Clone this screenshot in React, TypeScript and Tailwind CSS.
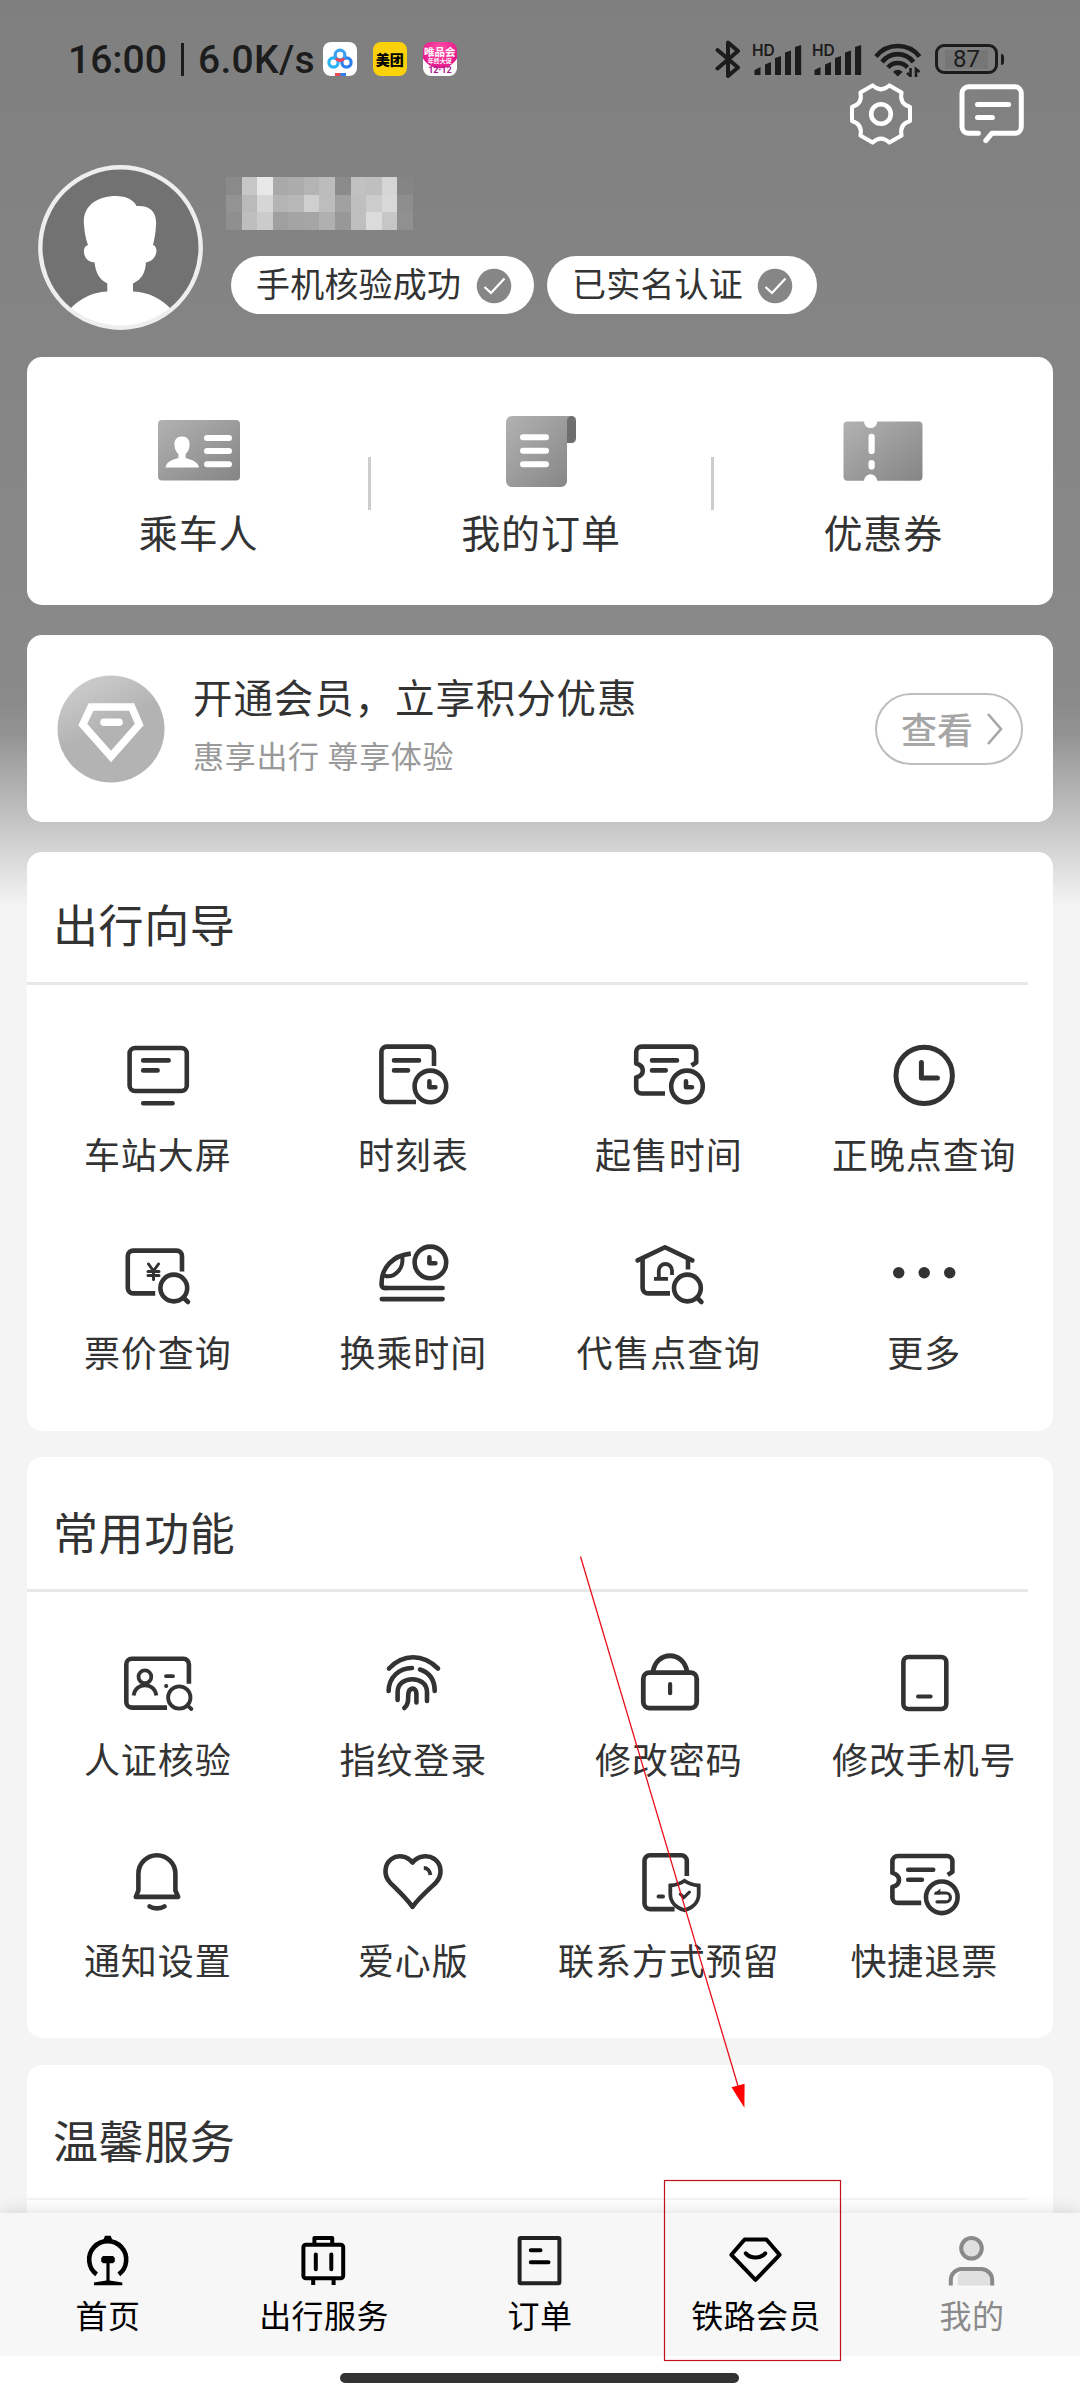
import type { ReactNode } from 'react';

interface Entry {
  label: string;
  icon: ReactNode;
}

// Mosaic over the user name, one class per block
const mosaicRows = [
  ['bg-[#8a8a8a]', 'bg-[#c6c6c6]', 'bg-[#e8e8e8]', 'bg-[#a9a9a9]', 'bg-[#acacac]', 'bg-[#b4b4b4]', 'bg-[#bcbcbc]', 'bg-[#8b8b8b]', 'bg-[#c1c1c1]', 'bg-[#bfbfbf]', 'bg-[#d5d5d5]', 'bg-[#858585]'],
  ['bg-[#939393]', 'bg-[#bababa]', 'bg-[#d6d6d6]', 'bg-[#b4b4b4]', 'bg-[#b8b8b8]', 'bg-[#cfcfcf]', 'bg-[#bdbdbd]', 'bg-[#a1a1a1]', 'bg-[#bfbfbf]', 'bg-[#cccccc]', 'bg-[#d8d8d8]', 'bg-[#8e8e8e]'],
  ['bg-[#8f8f8f]', 'bg-[#bebebe]', 'bg-[#cbcbcb]', 'bg-[#a0a0a0]', 'bg-[#a4a4a4]', 'bg-[#a5a5a5]', 'bg-[#b0b0b0]', 'bg-[#989898]', 'bg-[#bfbfbf]', 'bg-[#dbdbdb]', 'bg-[#c6c6c6]', 'bg-[#909090]'],
];

function LineIcon({ children }: { children: ReactNode }) {
  return (
    <svg
      viewBox="0 0 80 80"
      className="h-20 w-20"
      fill="none"
      stroke="#333"
      strokeWidth="4.6"
      strokeLinecap="round"
      strokeLinejoin="round"
    >
      {children}
    </svg>
  );
}

function SmallClock({ cx, cy }: { cx: number; cy: number }) {
  return (
    <g>
      <circle cx={cx} cy={cy} r="15.8" />
      <path d={`M${cx - 1} ${cy - 5} V${cy + 0.8} H${cx + 5}`} />
    </g>
  );
}

function Ticket() {
  return (
    <g>
      <path strokeLinecap="butt" d="M62.5 31.5 L67.2 28.5 V18.1 a5.5 5.5 0 0 0 -5.5 -5.5 H12.7 a5.5 5.5 0 0 0 -5.5 5.5 V29.5 C16 32 16 41 7.2 43.5 V54 a5.5 5.5 0 0 0 5.5 5.5 H36" />
      <path d="M23 26.4 H48 M23 36.4 H36.7" />
    </g>
  );
}

const guideItems: Entry[] = [
  {
    label: '车站大屏',
    icon: (
      <LineIcon>
        <rect x="11.6" y="14" width="57.2" height="43" rx="5.5" />
        <path d="M25.2 26.4 H50.6 M25.2 36.4 H39.6 M25.2 69.2 H54.6" />
      </LineIcon>
    ),
  },
  {
    label: '时刻表',
    icon: (
      <LineIcon>
        <path strokeLinecap="butt" d="M61 32 V18.1 a5.5 5.5 0 0 0 -5.5 -5.5 H13.9 a5.5 5.5 0 0 0 -5.5 5.5 V62.5 a5.5 5.5 0 0 0 5.5 5.5 H43" />
        <path d="M21 26.4 H46 M21 36.4 H35" />
        <SmallClock cx={57.4} cy={52.4} />
      </LineIcon>
    ),
  },
  {
    label: '起售时间',
    icon: (
      <LineIcon>
        <Ticket />
        <SmallClock cx={58} cy={52.4} />
      </LineIcon>
    ),
  },
  {
    label: '正晚点查询',
    icon: (
      <LineIcon>
        <g strokeWidth="5">
          <circle cx="40.2" cy="41.4" r="28.2" />
          <path d="M37.4 28.4 V43.9 H53.4" />
        </g>
      </LineIcon>
    ),
  },
  {
    label: '票价查询',
    icon: (
      <LineIcon>
        <path strokeLinecap="butt" d="M64 39.6 V24.1 a5.5 5.5 0 0 0 -5.5 -5.5 H15.3 a5.5 5.5 0 0 0 -5.5 5.5 V55.9 a5.5 5.5 0 0 0 5.5 5.5 H37.2" />
        <path strokeWidth="3" d="M30.5 32 L35.5 39 L40.5 32 M35.5 39 V47.5 M30 39.5 H41 M30 43.5 H41" />
        <circle cx="55.8" cy="56" r="13.4" />
        <path d="M65.8 66 L70 70" />
      </LineIcon>
    ),
  },
  {
    label: '换乘时间',
    icon: (
      <LineIcon>
        <path strokeLinecap="butt" d="M37.8 21.6 C20 23.5 8.6 35 8.6 51 V53 a3 3 0 0 0 3 3 H14" />
        <path d="M12 56 H69.6 M8.8 67.1 H69.6" />
        <path strokeWidth="4" d="M29 24 C31.5 36 22 46.5 11.5 43.8" />
        <SmallClock cx={57.4} cy={30.4} />
      </LineIcon>
    ),
  },
  {
    label: '代售点查询',
    icon: (
      <LineIcon>
        <path d="M8.6 28.4 L36 15.2 L63.4 28.4" />
        <path strokeLinecap="butt" d="M13.6 27 V55.9 a5.5 5.5 0 0 0 5.5 5.5 H41 M59 27 V37.4" />
        <path strokeWidth="3.8" strokeLinecap="butt" d="M25 46.8 H39 M29.8 46.8 V38.6 a6.6 6.6 0 0 1 13.2 0 V43" />
        <circle cx="58.4" cy="56" r="13.4" />
        <path d="M68.4 66 L72.4 70" />
      </LineIcon>
    ),
  },
  {
    label: '更多',
    icon: (
      <LineIcon>
        <g fill="#333" stroke="none">
          <circle cx="14.7" cy="40.7" r="5.7" />
          <circle cx="40.2" cy="40.7" r="5.7" />
          <circle cx="65.7" cy="40.7" r="5.7" />
        </g>
      </LineIcon>
    ),
  },
];

const commonItems: Entry[] = [
  {
    label: '人证核验',
    icon: (
      <LineIcon>
        <path strokeLinecap="butt" d="M70.9 40.7 V21.3 a5.5 5.5 0 0 0 -5.5 -5.5 H13.8 a5.5 5.5 0 0 0 -5.5 5.5 V59.1 a5.5 5.5 0 0 0 5.5 5.5 H49" />
        <g strokeWidth="3.8">
          <circle cx="26.9" cy="33.8" r="6.4" />
          <path strokeLinecap="butt" d="M15.6 52.5 C17.5 38.8 36.5 38.8 38.4 52.5" />
          <path d="M48 33.2 H55 M48 43 H48.4" />
          <circle cx="61.3" cy="54.5" r="11.2" />
          <path d="M69.6 62.6 L73.4 66" />
        </g>
      </LineIcon>
    ),
  },
  {
    label: '指纹登录',
    icon: (
      <LineIcon>
        <path d="M16 25.5 C30 10.5 50 10.5 65 25.5" />
        <path d="M15.6 48 C16 34 26 25.3 39 25" />
        <path d="M47 26.5 C56 29.5 61.7 36.5 61.7 48" />
        <path d="M24.6 57 V49 C24.6 32 54 32 54 49 V58" />
        <path d="M31.3 65 C34.8 62 35.2 59 35.2 53 C35.2 43.5 43.4 43.5 43.4 51 V59.5" />
      </LineIcon>
    ),
  },
  {
    label: '修改密码',
    icon: (
      <LineIcon>
        <g strokeWidth="4.8">
          <rect x="14.3" y="29.7" width="53.4" height="35.4" rx="6" />
          <path d="M24 28.5 C27.5 7.5 54.5 7.5 58 28.5" />
          <path strokeWidth="4.2" d="M41.1 41 V50.2" />
        </g>
      </LineIcon>
    ),
  },
  {
    label: '修改手机号',
    icon: (
      <LineIcon>
        <rect x="19.4" y="14" width="42.9" height="52" rx="5" />
        <path strokeWidth="4" d="M34 53.4 H46.6" />
      </LineIcon>
    ),
  },
  {
    label: '通知设置',
    icon: (
      <LineIcon>
        <path d="M17.8 52.9 L20.4 46.5 V29.8 a18.5 18.5 0 0 1 37 0 V46.5 L60.2 52.9 Z" />
        <path d="M31.5 62.4 C35.5 65 42.5 65 46.5 62.4" />
      </LineIcon>
    ),
  },
  {
    label: '爱心版',
    icon: (
      <LineIcon>
        <path d="M39.5 18.5 C34 11.5 24.5 10.5 18.5 15 C11 20.5 10.5 31.5 17 38.5 C20 41.8 32 52.5 39.5 62.8 C47 52.5 60 41.8 63 38.5 C69.5 31.5 69 20.5 61.5 15 C55 10.5 45 11.5 39.5 18.5 Z" />
        <path strokeWidth="3.8" strokeLinecap="butt" d="M50.8 24 C54 24 57 26.6 57.4 31" />
      </LineIcon>
    ),
  },
  {
    label: '联系方式预留',
    icon: (
      <LineIcon>
        <path strokeLinecap="butt" d="M57.8 32 V16.7 a5.5 5.5 0 0 0 -5.5 -5.5 H21 a5.5 5.5 0 0 0 -5.5 5.5 V59.6 a5.5 5.5 0 0 0 5.5 5.5 H45.6" />
        <path strokeWidth="4" d="M29.6 52.5 H34" />
        <g strokeWidth="3.8" strokeLinejoin="miter">
          <path d="M55.5 36.8 C51 40 46 41.3 41.3 41.5 V50 C41.3 58 47 63.7 55.5 66.2 C64 63.7 69.7 58 69.7 50 V41.5 C65 41.3 60 40 55.5 36.8 Z" />
          <path strokeWidth="3.2" d="M51.4 50.2 L54.8 53.6 L60.4 48.2" />
        </g>
      </LineIcon>
    ),
  },
  {
    label: '快捷退票',
    icon: (
      <LineIcon>
        <g transform="translate(1.2 -0.6)">
          <Ticket />
        </g>
        <circle cx="57.8" cy="53.3" r="15.8" />
        <path strokeWidth="3.2" d="M52 49 H62 a4.4 4.4 0 0 1 0 8.8 H53" />
        <path fill="#333" stroke="none" d="M49.5 50.4 L56.4 44.6 V50.4 Z" />
      </LineIcon>
    ),
  },
];

const tabs: (Entry & { active?: boolean })[] = [
  {
    label: '首页',
    icon: (
      <>
        <path strokeWidth="4.6" strokeLinecap="butt" d="M18.6 43.4 A18.5 18.5 0 1 1 40.8 43.4" />
        <path fill="#000" stroke="none" d="M27 4.8 H32.6 L34.6 9.5 H25 Z M25 25 H35 L36.8 27 V30.5 L35 32.2 H31.6 V49.5 L44.3 51.6 V54.3 H16 V51.6 L28.4 49.5 V32.2 H25 L23.2 30.5 V27 Z" />
      </>
    ),
  },
  {
    label: '出行服务',
    icon: (
      <>
        <rect x="9.4" y="13.8" width="39.8" height="33.4" rx="2.5" />
        <path strokeLinecap="butt" d="M20.4 13 V7.1 H38.2 V13 M19.2 47 V54 M39.6 47 V54" />
        <path d="M21.8 23.6 V38.2 M37.3 23.6 V38.2" />
      </>
    ),
  },
  {
    label: '订单',
    icon: (
      <>
        <rect x="9.6" y="7" width="39.8" height="45.2" rx="1" stroke="#222" />
        <path d="M20.8 19.3 H30.5 M20.8 31.3 H38.5" />
      </>
    ),
  },
  {
    label: '铁路会员',
    icon: (
      <>
        <path d="M18.6 8.5 H40.4 L53.6 23.8 L29.5 48.9 L5.4 23.8 Z" />
        <path d="M19.8 22.4 C24.5 28 34.5 28 39.2 22.4" />
      </>
    ),
  },
  {
    label: '我的',
    active: true,
    icon: (
      <g stroke="#8a8a8a" strokeLinecap="butt">
        <circle cx="29.5" cy="17.3" r="10.3" fill="#e0e0e0" />
        <path fill="#e0e0e0" stroke="none" d="M15.6 54.4 V48 C15.6 43 18 40 23 40 H49 V54.4 Z" />
        <path d="M8.8 54.4 V49 a11 11 0 0 1 11 -11 H39.2 a11 11 0 0 1 11 11 V54.4" />
      </g>
    ),
  },
];

function Signal() {
  return (
    <svg viewBox="0 0 50 36" className="h-9 w-[50px]" fill="#1c1c1c">
      <text x="0" y="14.5" fontFamily="Inter, sans-serif" fontSize="15.5" fontWeight="600">HD</text>
      <path d="M2.5 34 V29 L8.5 26 V34 Z M13 34 V23.5 L19 21 V34 Z M23 34 V17 L29 15 V34 Z M33 34 V11.5 L39 9.5 V34 Z M43 34 V6 L49.2 4 V34 Z" />
    </svg>
  );
}

function StatusBar() {
  return (
    <div className="flex h-9 items-center pr-[76px] pl-[68px] text-[#1c1c1c]">
      <div className="flex items-center pt-px font-[Roboto] text-[39px] leading-9 font-medium">
        <span>16:00</span>
        <span className="mr-[14px] ml-[14px] h-[33px] w-[3px] bg-[#1c1c1c]" />
        <span className="tracking-[0.3px]">6.0K/s</span>
      </div>
      <div className="ml-[8px] flex gap-4">
        <svg viewBox="0 0 34 34" className="h-[34px] w-[34px]">
          <rect width="34" height="34" rx="8" fill="#fff" />
          <g fill="none" strokeWidth="3.2">
            <circle cx="10.5" cy="20.5" r="4.6" stroke="#2bb3f3" />
            <circle cx="23.5" cy="20.5" r="4.6" stroke="#2f80ed" />
            <circle cx="17" cy="13" r="4.8" stroke="#3fa0f0" />
            <path d="M13 16.5 C15 19 19 19 21 16.5" stroke="#f0465a" />
          </g>
          <rect x="12" y="31" width="11" height="3" fill="#f0465a" />
          <rect x="17.5" y="31" width="5.5" height="3" fill="#2f80ed" />
        </svg>
        <div className="flex h-[34px] w-[34px] items-center justify-center rounded-[8px] bg-[#fbd20a] text-[14px] font-black text-black">
          美团
        </div>
        <div className="flex h-[34px] w-[34px] flex-col items-center overflow-hidden rounded-[8px] bg-[radial-gradient(circle_at_50%_20%,#ff4fa8_0,#e6198a_19px,#fff_20px)] text-white">
          <span className="mt-1 text-[10.5px] leading-[11px] font-bold whitespace-nowrap">唯品会</span>
          <span className="text-[6px] leading-[7px] font-bold whitespace-nowrap">年终大促</span>
          <span className="mt-[2px] font-[Roboto] text-[9px] leading-[9px] font-bold text-[#a8188c]">12·12</span>
        </div>
      </div>
      <div className="ml-auto flex items-center">
        <svg viewBox="0 0 26 40" className="mr-[11px] h-10 w-[26px]" fill="none" stroke="#1c1c1c" strokeWidth="4" strokeLinejoin="round" strokeLinecap="round">
          <path d="M2.5 11 L23 28.5 L13 37 V3.5 L23 12 L2.5 29.5" />
        </svg>
        <Signal />
        <div className="w-[10px]" />
        <Signal />
        <svg viewBox="0 0 48 36" className="ml-3 h-9 w-12" fill="none" stroke="#1c1c1c" strokeWidth="4.6">
          <path d="M2 15.5 C13 1.5 34.5 1.5 45.5 15.5" />
          <path d="M8 21 C16.5 10.5 31 10.5 39.5 21" />
          <path d="M14 26.5 C19 20.5 28.5 20.5 33.5 26.5" />
          <path d="M19 31 C22 28 25.5 28 28.5 31 L23.8 35.5 Z" fill="#1c1c1c" stroke="none" />
          <path d="M36.5 27 V35 L33 32 M42 36 V28 L45.5 31" strokeWidth="2.6" />
        </svg>
        <div className="ml-[13px] flex h-[30px] w-[63px] items-center justify-center rounded-[9px] border-[3px] border-[#1c1c1c]">
          <span className="flex h-[19px] w-[43px] items-center justify-center bg-[#767676] font-[Roboto] text-[24px] leading-[19px]">87</span>
        </div>
        <span className="ml-[3px] h-[11px] w-[3px] rounded-r bg-[#1c1c1c]" />
      </div>
    </div>
  );
}

function VerifiedPill({ text, className }: { text: string; className: string }) {
  return (
    <div className={`flex h-[58px] items-center rounded-full bg-white pb-px text-[34px] leading-[50px] tracking-[0.2px] text-[#333] ${className}`}>
      <span className="-mt-[3px]">{text}</span>
      <svg viewBox="0 0 36 36" className="mt-[2px] ml-auto h-9 w-9">
        <circle cx="18" cy="18" r="17.3" fill="#868686" />
        <path d="M8.5 19 L15 25 L28.5 10.5" fill="none" stroke="#fff" strokeWidth="2.2" />
      </svg>
    </div>
  );
}

function Avatar() {
  return (
    <svg viewBox="0 0 165 165" className="h-[165px] w-[165px]">
      <defs>
        <clipPath id="face">
          <circle cx="82.5" cy="82.5" r="80" />
        </clipPath>
      </defs>
      <circle cx="82.5" cy="82.5" r="80" fill="#727272" />
      <path
        clipPath="url(#face)"
        fill="#fff"
        d="M46 60 C44 42 58 31 78 31 C88 31 96 35 98.5 41 C112 40 119 47 118 60 C117.6 68 116.5 74 115 80 C119 81 119 87 117.5 90 C115.5 95 111 97.3 107.9 97.3 C107.5 106 105 114 95 118.5 V126.5 C112 127 124 135 132.5 143.5 L140 165 H25 L32.5 143.5 C41 135 53 127 69.3 126.5 V118.5 C60 114 57.5 106 56.5 97.3 C52 97.3 48 95 46.5 90 C45.3 86 45.5 81.5 50 80 C47.5 73 46.5 67 46 60 Z"
      />
      <circle cx="82.5" cy="82.5" r="80.2" fill="none" stroke="#eee" strokeWidth="4.4" />
    </svg>
  );
}

function Header() {
  return (
    <header className="flex flex-col">
      <div className="flex justify-end gap-11 pt-[5px] pr-[55px]">
        <svg viewBox="0 0 64 64" className="h-16 w-16" fill="none" stroke="#fff" strokeWidth="4" strokeLinejoin="round">
          <path d="M61 25 V39 Q50 42.4 52.6 53.6 L40.4 60.6 Q32 52.8 23.6 60.6 L11.4 53.6 Q14 42.4 3 39 V25 Q14 21.6 11.4 10.4 L23.6 3.4 Q32 11.2 40.4 3.4 L52.6 10.4 Q50 21.6 61 25 Z" />
          <circle cx="32" cy="32" r="9.8" strokeWidth="4.6" />
        </svg>
        <svg viewBox="0 0 68 64" className="h-16 w-[68px]" fill="none" stroke="#fff" strokeWidth="5" strokeLinecap="round" strokeLinejoin="round">
          <path d="M21.4 51.3 H11.5 a6.5 6.5 0 0 1 -6.5 -6.5 V11.3 a6.5 6.5 0 0 1 6.5 -6.5 H57.8 a6.5 6.5 0 0 1 6.5 6.5 V44.8 a6.5 6.5 0 0 1 -6.5 6.5 H34.8 L28.8 58.6" />
          <path d="M20.5 22.4 H51.6 M20.5 35.4 H35.4" />
        </svg>
      </div>
      <div className="mt-[19px] flex pl-[38px]">
        <Avatar />
        <div className="ml-[23px] pt-3">
          <div className="flex w-[187px] flex-col">
            {mosaicRows.map((row, i) => (
              <div key={i} className="flex h-[17.7px]">
                {row.map((color, j) => (
                  <span key={j} className={`flex-1 ${color}`} />
                ))}
              </div>
            ))}
          </div>
          <div className="mt-[26px] ml-[5px] flex gap-[13px]">
            <VerifiedPill text="手机核验成功" className="w-[303px] pr-[22px] pl-[25px]" />
            <VerifiedPill text="已实名认证" className="w-[270px] pr-[24px] pl-[25px]" />
          </div>
        </div>
      </div>
    </header>
  );
}

function QuickCard() {
  return (
    <section className="flex h-[248px] items-center rounded-[15px] bg-white pl-[2px]">
      <div className="flex flex-1 flex-col items-center pt-[9px]">
        <svg viewBox="0 0 82 72" className="h-[72px] w-[82px]">
          <defs>
            <linearGradient id="quick" x1="0" y1="0" x2="1" y2="1">
              <stop offset="0" stopColor="#b2b2b2" />
              <stop offset="1" stopColor="#858585" />
            </linearGradient>
          </defs>
          <rect y="5" width="82" height="60.5" rx="4" fill="url(#quick)" />
          <path fill="#fff" d="M24 21.5 C29 21.5 31.8 25 31.6 29.5 C31.4 34 30 37 27.6 39 V43 C34 45 40 46.5 41 52.5 H7.5 C8.5 46.5 14 45 20.4 43 V39 C18 37 16.6 34 16.4 29.5 C16.2 25 19 21.5 24 21.5 Z" />
          <path stroke="#fff" strokeWidth="6" strokeLinecap="round" d="M49 23 H71 M49 36 H71 M49 49.2 H71" />
        </svg>
        <span className="mt-[19px] text-[39px] leading-[50px] tracking-[0.9px]">乘车人</span>
      </div>
      <span className="mt-1 h-[53px] w-[3px] bg-[#cdcdcd]" />
      <div className="flex flex-1 flex-col items-center pt-[9px]">
        <svg viewBox="0 0 70 72" className="h-[72px] w-[70px]">
          <rect x="55" y="1" width="15" height="27" rx="4.5" fill="#6e6e6e" />
          <path fill="url(#quick)" d="M6 1 H65 C62 1.5 61 4 61 7 V66 a6 6 0 0 1 -6 6 H6 a6 6 0 0 1 -6 -6 V7 a6 6 0 0 1 6 -6 Z" />
          <path stroke="#fff" strokeWidth="6" strokeLinecap="round" d="M17 22.3 H40 M17 35.7 H40 M17 49.3 H40" />
        </svg>
        <span className="mt-[19px] text-[39px] leading-[50px] tracking-[0.9px]">我的订单</span>
      </div>
      <span className="mt-1 h-[53px] w-[3px] bg-[#cdcdcd]" />
      <div className="flex flex-1 flex-col items-center pt-[9px]">
        <svg viewBox="0 0 80 72" className="h-[72px] w-20">
          <path fill="url(#quick)" d="M4.5 6.5 H21 a6.6 6.6 0 0 0 13.2 0 H75.5 a4 4 0 0 1 4 4 V61.8 a4 4 0 0 1 -4 4 H34.2 a6.6 6.6 0 0 0 -13.2 0 H4.5 a4 4 0 0 1 -4 -4 V10.5 a4 4 0 0 1 4 -4 Z" />
          <path stroke="#fff" strokeWidth="6.2" strokeLinecap="round" d="M28.6 21.8 V36 M28.6 48 V51.5" />
        </svg>
        <span className="mt-[19px] text-[39px] leading-[50px] tracking-[0.9px]">优惠券</span>
      </div>
    </section>
  );
}

function MemberCard() {
  return (
    <section className="mt-[30px] flex h-[187px] items-center rounded-[15px] bg-white pr-[30px] pl-[30px]">
      <svg viewBox="0 0 108 108" className="h-[108px] w-[108px]">
        <defs>
          <linearGradient id="badge" x1="0.2" y1="0" x2="0.45" y2="0.5">
            <stop offset="0" stopColor="#cecece" />
            <stop offset="1" stopColor="#b3b3b3" />
          </linearGradient>
        </defs>
        <circle cx="54" cy="54" r="53.5" fill="url(#badge)" />
        <path fill="none" stroke="#fff" strokeWidth="7.6" d="M34 32 H74.6 L82.2 49.5 L54 81.5 L25.8 49.5 Z" />
        <path stroke="#fff" strokeWidth="7.6" strokeLinecap="round" d="M47 47.3 H62" />
      </svg>
      <div className="ml-7 flex flex-col pb-[9px]">
        <span className="text-[39.5px] leading-[50px] tracking-[0.9px]">开通会员，立享积分优惠</span>
        <span className="mt-[12px] text-[31px] leading-[44px] tracking-[0.7px] text-[#999]">惠享出行 尊享体验</span>
      </div>
      <div className="ml-auto flex h-[72px] w-[148px] items-center rounded-full border-2 border-[#bdbdbd] pl-6 text-[36px] leading-[50px] font-medium text-[#a6a6a6]">
        <span className="-mt-[2px]">查看</span>
        <svg viewBox="0 0 18 34" className="ml-[13px] h-[34px] w-[18px]" fill="none" stroke="#a6a6a6" strokeWidth="2.6">
          <path d="M2 2 L15 17 L2 32" />
        </svg>
      </div>
    </section>
  );
}

function EntryGrid({ items, className, gap }: { items: Entry[]; className: string; gap: string }) {
  return (
    <div className={`grid grid-cols-4 pr-px pl-[3px] ${className}`}>
      {items.map((item) => (
        <div key={item.label} className={`flex flex-col items-center ${gap}`}>
          {item.icon}
          <span className="text-[36px] leading-10 tracking-[0.9px] whitespace-nowrap">{item.label}</span>
        </div>
      ))}
    </div>
  );
}

function TabBar() {
  return (
    <nav className="relative flex h-[143px] bg-[#f7f7f7] pt-[18px] shadow-[0_-2px_16px_rgba(0,0,0,0.12)]">
      {tabs.map((tab) => (
        <div key={tab.label} className="flex flex-1 flex-col items-center gap-[5px]">
          <svg viewBox="0 0 60 60" className="h-[60px] w-[60px]" fill="none" stroke="#000" strokeWidth="4" strokeLinecap="round" strokeLinejoin="round">
            {tab.icon}
          </svg>
          <span className={`text-[32px] leading-9 tracking-[0.4px] ${tab.active ? 'text-[#8a8a8a]' : 'text-black'}`}>
            {tab.label}
          </span>
        </div>
      ))}
    </nav>
  );
}

// Red arrow and frame that point at the member tab
function Annotation() {
  return (
    <svg viewBox="0 0 1080 2400" className="pointer-events-none absolute inset-0 h-[2400px] w-[1080px]">
      <path d="M580.5 1556.5 L738 2086" stroke="#e8101c" strokeWidth="1.3" />
      <path d="M731.5 2087.3 L744.6 2083.7 L744.4 2107.7 Z" fill="#f00" />
      <rect x="664.5" y="2180.5" width="176" height="180" fill="none" stroke="#c0101c" strokeWidth="1.2" />
    </svg>
  );
}

export default function App() {
  return (
    <div className="relative flex h-[2400px] w-[1080px] flex-col overflow-hidden bg-[#f4f4f4] font-['Noto_Sans_CJK_SC',sans-serif] text-[#333]">
      <div className="min-h-0 flex-1 overflow-hidden bg-[linear-gradient(to_bottom,#7f7f7f_0px,#8a8a8a_700px,#939393_735px,#c6c6c6_825px,#d4d4d4_850px,#f4f4f4_905px)]">
        <div className="h-[41px]" />
        <StatusBar />
        <Header />
        <main className="mt-[27px] px-[27px]">
          <QuickCard />
          <MemberCard />
          <section className="mt-[30px] h-[579px] rounded-[15px] bg-white">
            <h2 className="h-[130px] pt-[44px] pl-[26px] text-[45px] leading-[56px] tracking-[0.6px]">出行向导</h2>
            <div className="mr-[25px] h-[3px] bg-[#e8e8e8]" />
            <EntryGrid items={guideItems} className="gap-y-[59px] pt-[49px]" gap="gap-[19px]" />
          </section>
          <section className="mt-[26px] h-[581px] rounded-[15px] bg-white">
            <h2 className="h-[132px] pt-[47px] pl-[26px] text-[45px] leading-[56px] tracking-[0.6px]">常用功能</h2>
            <div className="mr-[25px] h-[3px] bg-[#e8e8e8]" />
            <EntryGrid items={commonItems} className="gap-y-[66px] pt-[51px]" gap="gap-[15px]" />
          </section>
          <section className="mt-[27px] h-[400px] rounded-[15px] bg-white">
            <h2 className="h-[133px] pt-[47px] pl-[26px] text-[45px] leading-[56px] tracking-[0.6px]">温馨服务</h2>
            <div className="mr-[25px] h-[2px] bg-[#f4f4f4]" />
          </section>
        </main>
      </div>
      <TabBar />
      <div className="relative flex h-[44px] justify-center bg-white pt-[17px] pr-[2px]">
        <span className="h-[10px] w-[399px] rounded-full bg-[#333]" />
      </div>
      <Annotation />
    </div>
  );
}
